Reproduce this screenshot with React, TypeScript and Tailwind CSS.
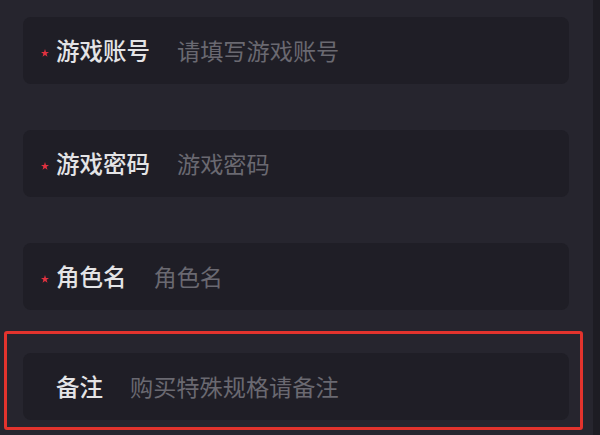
import React from "react";

const Star = ({ show }: { show: boolean }) => (
  <svg width="8" height="8" viewBox="0 0 10 10" className={show ? "mt-[4px] shrink-0" : "mt-[4px] shrink-0 invisible"}>
    <polygon points="5,0 6.2,3.6 10,3.7 7,6 8.1,9.8 5,7.5 1.9,9.8 3,6 0,3.7 3.8,3.6" fill="#e0313f" />
  </svg>
);

const Field = ({ label, placeholder, required }: { label: string; placeholder: string; required: boolean }) => (
  <div className="flex h-[67px] w-[546px] items-center rounded-[8px] bg-[#1f1e26] pl-[18px]">
    <Star show={required} />
    <span className="ml-[7px] text-[23.5px] font-medium leading-none text-[#e4e4e6]">{label}</span>
    <span className="ml-[27px] text-[23.2px] leading-none text-[#6a6971]">{placeholder}</span>
  </div>
);

export default function App() {
  return (
    <div
      className="flex h-[435px] w-[600px] overflow-hidden bg-[#26252e]"
      style={{ fontFamily: '"Noto Sans CJK SC", "Noto Sans", sans-serif' }}
    >
      <div className="flex flex-1 flex-col pt-[17px]">
        <div className="ml-[23px] flex flex-col gap-[46px]">
          <Field label="游戏账号" placeholder="请填写游戏账号" required />
          <Field label="游戏密码" placeholder="游戏密码" required />
          <Field label="角色名" placeholder="角色名" required />
        </div>
        <div className="ml-[4px] mt-[21px] w-[579px] rounded-[3px] border-[3px] border-[#e2332d] pb-[7px] pl-[16px] pr-[11px] pt-[19px]">
          <Field label="备注" placeholder="购买特殊规格请备注" required={false} />
        </div>
      </div>
      <div className="w-[7px] bg-[#1d1c23]" />
    </div>
  );
}
